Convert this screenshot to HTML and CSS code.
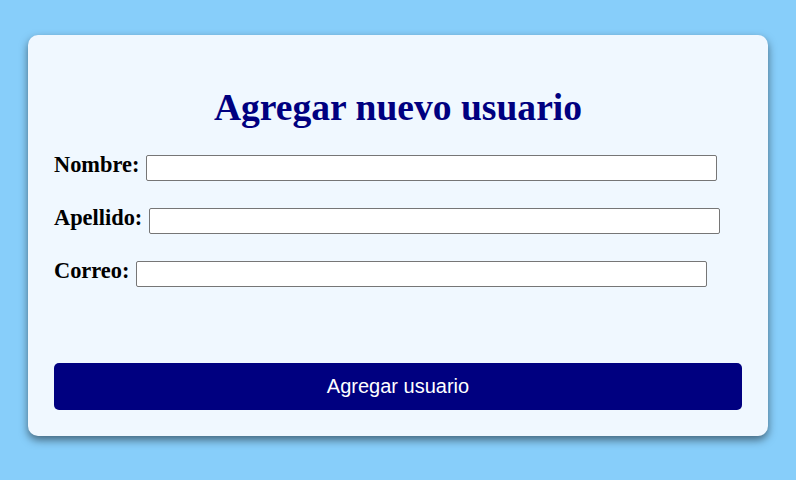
FILE: index.html
```html
<!DOCTYPE html>
<html lang="es">
<head>
<meta charset="utf-8">
<title>Agregar nuevo usuario</title>
<link rel="stylesheet" href="styles.css">
</head>
<body>
<div class="card">
  <h1 class="title">Agregar nuevo usuario</h1>
  <form class="form">
    <div class="row">
      <label class="label" for="nombre">Nombre:</label>
      <input class="field" type="text" id="nombre">
    </div>
    <div class="row">
      <label class="label" for="apellido">Apellido:</label>
      <input class="field" type="text" id="apellido">
    </div>
    <div class="row">
      <label class="label" for="correo">Correo:</label>
      <input class="field" type="text" id="correo">
    </div>
    <button class="submit" type="button">Agregar usuario</button>
  </form>
</div>
</body>
</html>
```
FILE: styles.css
```css
html, body {
  margin: 0;
  padding: 0;
}
body {
  background: #87cefa;
  padding: 35px 0 44px;
  font-family: "Liberation Serif", "Times New Roman", serif;
}
.card {
  box-sizing: border-box;
  width: 740px;
  height: 401px;
  margin: 0 auto;
  background: #f0f8ff;
  border-radius: 10px;
  box-shadow: 0 4px 8px rgba(0, 0, 0, 0.5);
  padding: 52px 26px 26px;
}
.title {
  margin: 0 0 23px;
  text-align: center;
  color: #000080;
  font-size: 37.6px;
  font-weight: bold;
  line-height: 42px;
}
.form {
  display: flex;
  flex-direction: column;
}
.row {
  display: flex;
  align-items: baseline;
  gap: 7px;
  margin-bottom: 24.5px;
}
.label {
  font-size: 22.4px;
  font-weight: bold;
  color: #000;
}
.field {
  box-sizing: border-box;
  width: 571px;
  height: 26px;
  margin: 0;
  padding: 2px 4px;
  border: 1px solid #767676;
  border-radius: 2px;
  background: #fff;
  font-family: "Liberation Sans", Arial, sans-serif;
  font-size: 13px;
}
.submit {
  margin-top: 52px;
  height: 47px;
  width: 100%;
  border: none;
  border-radius: 5px;
  background: #000080;
  color: #fff;
  font-family: "Liberation Sans", Arial, sans-serif;
  font-size: 20px;
  cursor: pointer;
}
```
